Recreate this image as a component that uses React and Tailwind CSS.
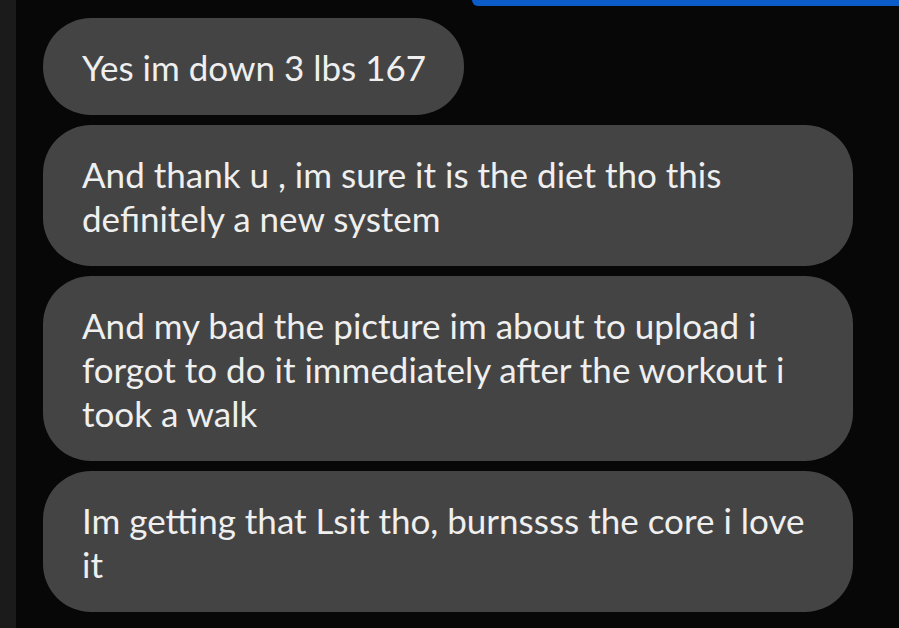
import React from 'react';

const messages = [
  { lines: ['Yes im down 3 lbs 167'], w: 'w-[421px]' },
  { lines: ['And thank u , im sure it is the diet tho this', 'definitely a new system'], w: 'w-[810px]' },
  {
    lines: [
      'And my bad the picture im about to upload i',
      'forgot to do it immediately after the workout i',
      'took a walk',
    ],
    w: 'w-[810px]',
  },
  { lines: ['Im getting that Lsit tho, burnssss the core i love', 'it'], w: 'w-[810px]' },
];

const Bubble = ({ lines, w }) => (
  <div className={`${w} bg-[#444444] rounded-[48px] pl-[39px] pr-[39px] pt-[27px] pb-[26px] text-[#efefef] text-[35px] leading-[44px]`}>
    {lines.map((l, i) => (
      <div key={i} className="whitespace-nowrap">{l}</div>
    ))}
  </div>
);

export default function App() {
  return (
    <div className="w-[899px] h-[628px] bg-[#070707] flex overflow-hidden" style={{ fontFamily: 'Lato, "Open Sans", sans-serif' }}>
      <div className="w-[16px] shrink-0 bg-[#1b1b1b]" />
      <div className="flex-1 flex flex-col">
        <div className="flex justify-end">
          <div className="w-[427px] h-[6px] bg-[#0b5cc8] rounded-bl-[40px]" />
        </div>
        <div className="flex flex-col gap-[10px] pl-[27px] pt-[12px]">
          {messages.map((m, i) => (
            <Bubble key={i} {...m} />
          ))}
        </div>
      </div>
    </div>
  );
}
